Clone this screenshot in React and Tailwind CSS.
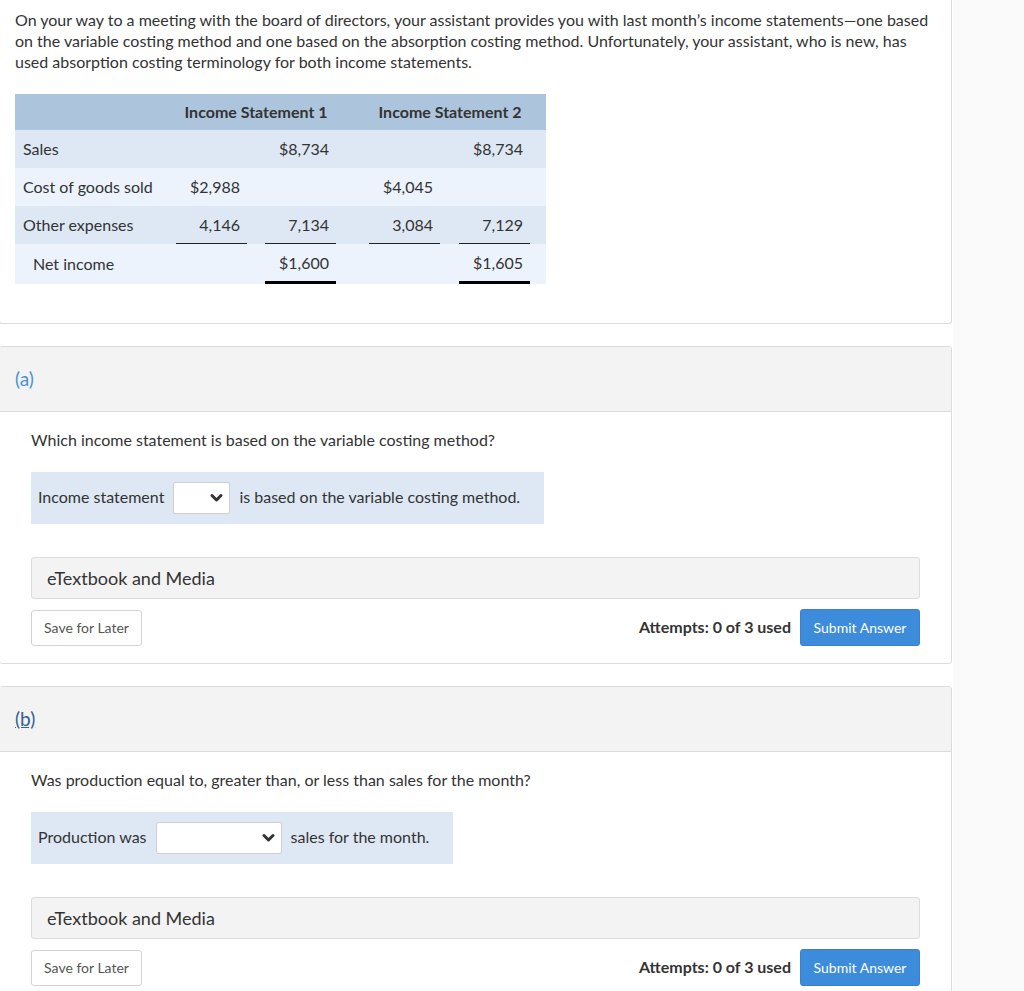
import React from 'react';

const rows = [
  { label: 'Sales', cells: ['', '$8,734', '', '$8,734'], bg: 'bg-[#dee8f4]' },
  { label: 'Cost of goods sold', cells: ['$2,988', '', '$4,045', ''], bg: 'bg-[#ecf3fc]' },
  { label: 'Other expenses', cells: ['4,146', '7,134', '3,084', '7,129'], bg: 'bg-[#dee8f4]', rule: 'thin' },
  { label: 'Net income', cells: ['', '$1,600', '', '$1,605'], bg: 'bg-[#ecf3fc]', rule: 'thick', indent: true },
];

const colBox = ['w-[83px] pr-[6px]', 'w-[89px] pr-[6px]', 'w-[104px] pr-[6px]', 'w-[100px] pr-[16px]'];

function Cell({ value, col, rule }) {
  let line = 'border-b border-transparent';
  if (rule === 'thin') line = 'border-b border-[#222]';
  if (rule === 'thick' && value) line = 'border-b-[3px] border-black';
  if (rule === 'thick' && !value) line = 'border-b-[3px] border-transparent';
  return (
    <div className={`${colBox[col]} flex justify-end h-full`}>
      <div className={`w-[71px] pr-[7px] text-right flex items-center justify-end ${line}`}>{value}</div>
    </div>
  );
}

function IncomeTable() {
  return (
    <div className="w-[531px] mt-[22px] text-[16px]">
      <div className="flex h-[36px] bg-[#adc4dd] font-bold items-center">
        <div className="w-[155px]" />
        <div className="w-[172px] text-center">Income Statement 1</div>
        <div className="w-[204px] text-center pl-[12px]">Income Statement 2</div>
      </div>
      {rows.map((r) => (
        <div key={r.label} className={`flex ${r.rule === 'thick' ? 'h-[40px]' : 'h-[38px]'} ${r.bg}`}>
          <div className={`w-[155px] flex items-center ${r.indent ? 'pl-[18px]' : 'pl-[8px]'}`}>{r.label}</div>
          {r.cells.map((c, i) => (
            <Cell key={i} value={c} col={i} rule={r.rule} />
          ))}
        </div>
      ))}
    </div>
  );
}

function Chevron() {
  return (
    <svg width="13" height="10" viewBox="0 0 13 10" className="text-[#333]">
      <polyline points="2,2.5 6.5,7 11,2.5" fill="none" stroke="currentColor" strokeWidth="3" strokeLinecap="round" strokeLinejoin="round" />
    </svg>
  );
}

function Select({ width }) {
  return (
    <div className={`${width} h-[32px] bg-white border border-[#cfcfcf] rounded-[2px] flex items-center justify-end pr-[6px] mx-[9px]`}>
      <Chevron />
    </div>
  );
}

function Part({ tag, tagClass, question, before, selectWidth, after, boxWidth }) {
  return (
    <div className="w-[953px] -ml-px border border-[#dcdcdc] rounded-[3px] bg-white">
      <div className="h-[65px] bg-[#f3f3f3] border-b border-[#dcdcdc] flex items-center pl-[15px]">
        <span className={`text-[19px] ${tagClass}`}>{tag}</span>
      </div>
      <div className="pl-[31px] pr-[31px] pt-[17px] pb-[17px]">
        <p className="text-[16px] leading-[21px]">{question}</p>
        <div className={`${boxWidth} h-[52px] mt-[22px] bg-[#dee8f4] flex items-center pl-[7px] text-[16px] leading-[20px]`}>
          <span className="-mt-[2px]">{before}</span>
          <Select width={selectWidth} />
          <span className="-mt-[2px]">{after}</span>
        </div>
        <div className="mt-[33px] h-[42px] bg-[#f3f3f3] border border-[#dcdcdc] rounded-[3px] flex items-center pl-[15px] text-[18px]">
          eTextbook and Media
        </div>
        <div className="mt-[10px] flex items-center justify-between">
          <button className="w-[111px] h-[36px] bg-white border border-[#d4d4d4] rounded-[3px] text-[14px] text-[#555]">
            Save for Later
          </button>
          <div className="flex items-center gap-[9px]">
            <span className="text-[16px] font-bold -mt-[2px]">Attempts: 0 of 3 used</span>
            <button className="w-[120px] h-[37px] bg-[#3d8bdb] border border-[#3a80cc] rounded-[3px] text-[14px] text-white">
              Submit Answer
            </button>
          </div>
        </div>
      </div>
    </div>
  );
}

export default function App() {
  return (
    <div className="flex min-h-[991px] text-[#333] bg-white" style={{ fontFamily: 'Lato, "Open Sans", sans-serif' }}>
      <div className="w-[953px] bg-white">
        <div className="w-[953px] -ml-px border border-t-0 border-[#dcdcdc] rounded-b-[3px] pl-[15px] pt-[9px] pb-[39px]">
          <p className="text-[16px] leading-[21px] pr-[16px]">
            On your way to a meeting with the board of directors, your assistant provides you with last month’s income
            statements—one based on the variable costing method and one based on the absorption costing method.
            Unfortunately, your assistant, who is new, has used absorption costing terminology for both income statements.
          </p>
          <IncomeTable />
        </div>
        <div className="mt-[22px]">
          <Part
            tag="(a)"
            tagClass="text-[#4a90dc]"
            question="Which income statement is based on the variable costing method?"
            before="Income statement"
            selectWidth="w-[57px]"
            after="is based on the variable costing method."
            boxWidth="w-[513px]"
          />
        </div>
        <div className="mt-[22px]">
          <Part
            tag="(b)"
            tagClass="text-[#2f5f9c] underline"
            question="Was production equal to, greater than, or less than sales for the month?"
            before="Production was"
            selectWidth="w-[126px]"
            after="sales for the month."
            boxWidth="w-[422px]"
          />
        </div>
      </div>
      <div className="flex-1 bg-[#fafafa]" />
    </div>
  );
}
